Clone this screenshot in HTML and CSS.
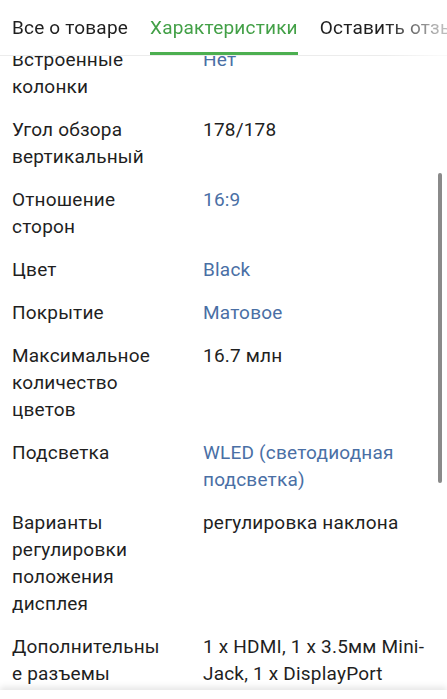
FILE: index.html
```html
<!DOCTYPE html>
<html lang="ru">
<head>
<meta charset="utf-8">
<title>Характеристики</title>
<link rel="stylesheet" href="styles.css">
</head>
<body>
<div class="screen">
  <nav class="tabs">
    <div class="tab">Все о товаре</div>
    <div class="tab active">Характеристики</div>
    <div class="tab">Оставить отзыв</div>
  </nav>
  <main class="viewport">
    <div class="specs">
      <div class="row"><div class="label">Встроенные колонки</div><div class="value link">Нет</div></div>
      <div class="row"><div class="label">Угол обзора вертикальный</div><div class="value">178/178</div></div>
      <div class="row"><div class="label">Отношение сторон</div><div class="value link">16:9</div></div>
      <div class="row"><div class="label">Цвет</div><div class="value link">Black</div></div>
      <div class="row"><div class="label">Покрытие</div><div class="value link">Матовое</div></div>
      <div class="row"><div class="label">Максимальное количество цветов</div><div class="value">16.7 млн</div></div>
      <div class="row"><div class="label">Подсветка</div><div class="value link">WLED (светодиодная подсветка)</div></div>
      <div class="row"><div class="label">Варианты регулировки положения дисплея</div><div class="value">регулировка наклона</div></div>
      <div class="row"><div class="label">Дополнительные разъемы</div><div class="value">1 x HDMI, 1 x 3.5мм Mini-Jack, 1 x DisplayPort</div></div>
      <div class="row"><div class="label">Разрешение</div><div class="value">1920x1080</div></div>
    </div>
    <div class="scrollbar"></div>
  </main>
  <footer class="bottom"></footer>
</div>
</body>
</html>
```
FILE: styles.css
```css
* { box-sizing: border-box; }
html, body { margin: 0; padding: 0; background: #fff; }
body {
  font-family: Roboto, "Noto Sans", sans-serif;
  font-size: 19px;
  letter-spacing: 0.2px;
  color: #1f1f1f;
}
.screen {
  width: 447px;
  height: 699px;
  display: flex;
  flex-direction: column;
  overflow: hidden;
}
.tabs {
  flex: 0 0 56px;
  display: flex;
  gap: 22px;
  padding: 0 0 0 12px;
  border-bottom: 1px solid #ececec;
  white-space: nowrap;
  overflow: hidden;
  position: relative;
  background: #fff;
  -webkit-mask-image: linear-gradient(to right, #000 0, #000 385px, rgba(0,0,0,0.3) 440px);
}
.tab {
  height: 55px;
  line-height: 55px;
  color: #1f1f1f;
  position: relative;
}
.tab.active { color: #43a047; }
.tab.active::after {
  content: "";
  position: absolute;
  left: 0; right: 0; bottom: 0;
  height: 3px;
  background: #4caf50;
}
.viewport {
  flex: 1 1 auto;
  overflow: hidden;
  position: relative;
}
.specs {
  margin-top: -18.5px;
  padding: 0 12px;
}
.row {
  display: grid;
  grid-template-columns: 152px 1fr;
  column-gap: 39px;
  padding: 8px 0;
  line-height: 27px;
}
.label { overflow-wrap: anywhere; }
.value { color: #1f1f1f; }
.value.link { color: #4a6fa5; }
.scrollbar {
  position: absolute;
  left: 438px;
  top: 117px;
  width: 4px;
  height: 310px;
  border-radius: 2px;
  background: #8a8a8a;
}
.bottom {
  flex: 0 0 9px;
  background: #fff;
  box-shadow: 0 -3px 6px rgba(0,0,0,0.10);
  position: relative;
}
```
